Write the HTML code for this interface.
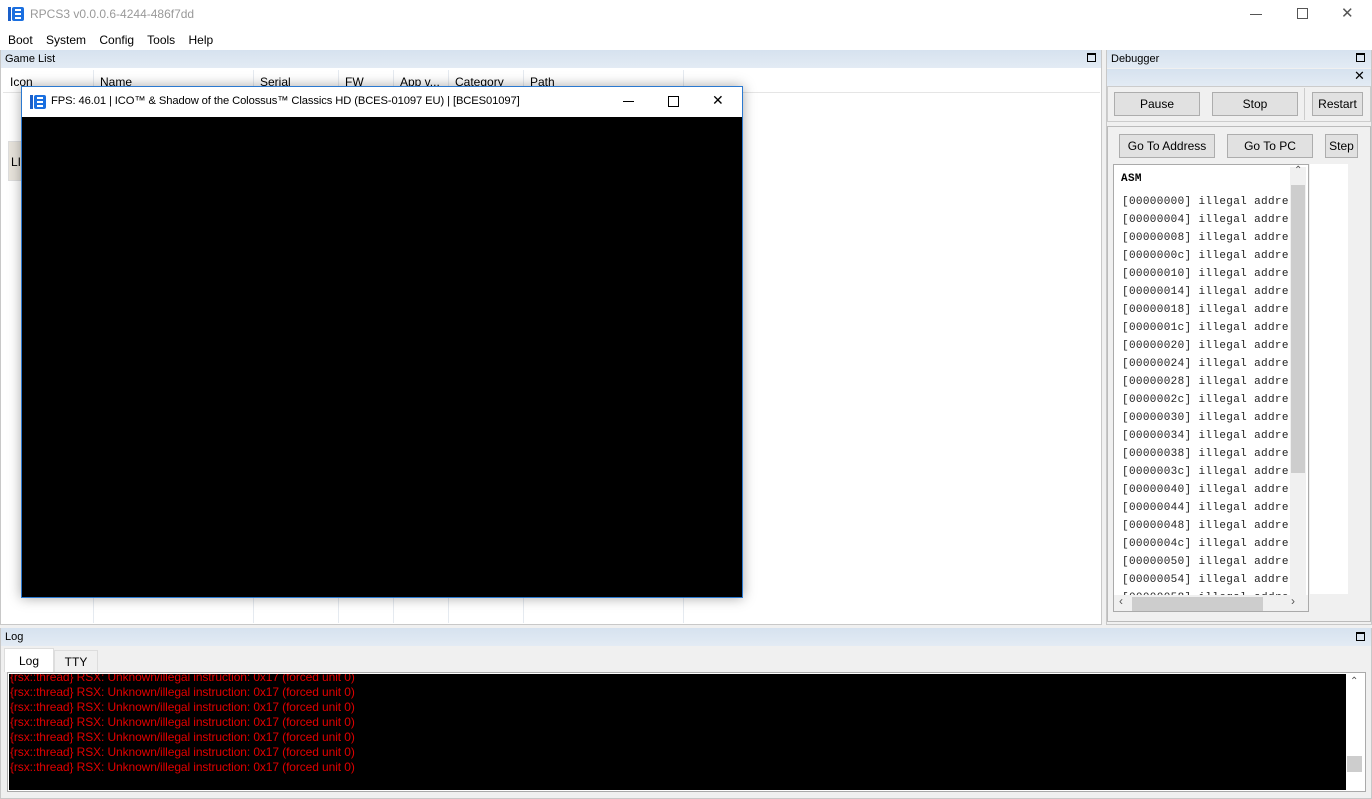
<!DOCTYPE html>
<html><head><style>
*{margin:0;padding:0;box-sizing:border-box}
body{width:1372px;height:799px;overflow:hidden;background:#f0f0f0;font-family:"Liberation Sans",sans-serif;font-size:12px;color:#000;position:relative}
.a{position:absolute}
.hdr{background:linear-gradient(#d6e2ef,#e3ebf4);height:18px;line-height:18px;padding-left:4px;font-size:11px}
.btn{position:absolute;background:#e1e1e1;border:1px solid #adadad;text-align:center;font-size:12px}
.mono{font-family:"Liberation Mono",monospace;font-size:11px;color:#000;letter-spacing:0.35px}
.log{color:#e00000;font-size:12px;letter-spacing:-0.1px;line-height:15px;position:absolute;left:10px;white-space:nowrap}
.col{position:absolute;top:70px;height:553px;border-left:1px solid #e5eaf0}
</style></head><body>
<div class="a" style="left:0;top:0;width:1372px;height:50px;background:#fff"></div>
<svg class="a" style="left:8px;top:7px" width="16" height="14"><rect x="0" y="0" width="3" height="14" fill="#1a5fc9"/><rect x="4" y="0" width="12" height="14" rx="2" fill="#1a6fe0"/><path d="M7 3h6M7 7h6M7 11h6" stroke="#fff" stroke-width="2"/></svg>
<div class="a" style="left:30px;top:7px;color:#999;font-size:12px">RPCS3 v0.0.0.6-4244-486f7dd</div>
<div class="a" style="left:1250px;top:14px;width:12px;height:1px;background:#555"></div>
<div class="a" style="left:1297px;top:8px;width:11px;height:11px;border:1px solid #555"></div>
<div class="a" style="left:1341px;top:4px;font-size:15px;color:#555">&#10005;</div>
<div class="a" style="left:8px;top:33px;font-size:12px;word-spacing:10px">Boot System Config Tools Help</div>

<div class="a" style="left:0;top:50px;width:1102px;height:575px;border:1px solid #c8c8c8;background:#fff"></div>
<div class="a hdr" style="left:1px;top:50px;width:1100px">Game List</div>
<div class="a" style="left:1087px;top:53px;width:9px;height:9px;border:1px solid #000;border-top-width:2px"></div>
<div class="a" style="left:3px;top:70px;width:1097px;height:23px;border-bottom:1px solid #e5e5e5"></div>
<div class="col" style="left:93px"></div><div class="col" style="left:253px"></div><div class="col" style="left:338px"></div><div class="col" style="left:393px"></div><div class="col" style="left:448px"></div><div class="col" style="left:523px"></div><div class="col" style="left:683px"></div>
<div class="a" style="top:75px;left:10px">Icon</div><div class="a" style="top:75px;left:100px">Name</div><div class="a" style="top:75px;left:260px">Serial</div><div class="a" style="top:75px;left:345px">FW</div><div class="a" style="top:75px;left:400px">App v...</div><div class="a" style="top:75px;left:455px">Category</div><div class="a" style="top:75px;left:530px">Path</div>
<div class="a" style="left:8px;top:141px;width:16px;height:40px;background:#e8e4dc;border:1px solid #ddd;padding:13px 0 0 2px;overflow:hidden">LIF</div>

<div class="a" style="left:21px;top:86px;width:722px;height:512px;border:1px solid #2b79d0;background:#000;box-shadow:0 0 12px rgba(0,0,0,.35)"></div>
<div class="a" style="left:22px;top:87px;width:720px;height:30px;background:#fff"></div>
<svg class="a" style="left:30px;top:95px" width="16" height="14"><rect x="0" y="0" width="3" height="14" fill="#1a5fc9"/><rect x="4" y="0" width="12" height="14" rx="2" fill="#1a6fe0"/><path d="M7 3h6M7 7h6M7 11h6" stroke="#fff" stroke-width="2"/></svg>
<div class="a" style="left:51px;top:95px;font-size:11.2px;letter-spacing:-0.1px">FPS: 46.01 | ICO™ &amp; Shadow of the Colossus™ Classics HD (BCES-01097 EU) | [BCES01097]</div>
<div class="a" style="left:623px;top:101px;width:11px;height:1px;background:#000"></div>
<div class="a" style="left:668px;top:96px;width:11px;height:11px;border:1px solid #000"></div>
<div class="a" style="left:712px;top:92px;font-size:14px">&#10005;</div>

<div class="a" style="left:1106px;top:50px;width:266px;height:575px;border:1px solid #c8c8c8;background:#f0f0f0"></div>
<div class="a hdr" style="left:1107px;top:50px;width:264px">Debugger</div>
<div class="a" style="left:1356px;top:53px;width:9px;height:9px;border:1px solid #000;border-top-width:2px"></div>
<div class="a" style="left:1107px;top:69px;width:264px;height:17px;background:linear-gradient(#d6e2ef,#e3ebf4)"></div>
<div class="a" style="left:1354px;top:68px;font-size:13px">&#10005;</div>
<div class="a" style="left:1107px;top:86px;width:264px;height:36px;border:1px solid #ccc"></div>
<div class="a" style="left:1304px;top:88px;width:1px;height:32px;background:#ccc"></div>
<div class="btn" style="left:1114px;top:92px;width:86px;height:24px;line-height:22px">Pause</div>
<div class="btn" style="left:1212px;top:92px;width:86px;height:24px;line-height:22px">Stop</div>
<div class="btn" style="left:1312px;top:92px;width:51px;height:24px;line-height:22px">Restart</div>
<div class="a" style="left:1107px;top:126px;width:264px;height:496px;border:1px solid #bbb"></div>
<div class="btn" style="left:1119px;top:134px;width:96px;height:24px;line-height:22px">Go To Address</div>
<div class="btn" style="left:1227px;top:134px;width:86px;height:24px;line-height:22px">Go To PC</div>
<div class="btn" style="left:1325px;top:134px;width:33px;height:24px;line-height:22px">Step</div>
<div class="a" style="left:1113px;top:164px;width:196px;height:448px;border:1px solid #aaa;background:#fff;overflow:hidden">
<div class="mono a" style="left:7px;top:8px;font-weight:bold">ASM</div>
<div class="mono a" style="left:8px;top:28px;line-height:18px;white-space:pre;color:#222">[00000000] illegal addre
[00000004] illegal addre
[00000008] illegal addre
[0000000c] illegal addre
[00000010] illegal addre
[00000014] illegal addre
[00000018] illegal addre
[0000001c] illegal addre
[00000020] illegal addre
[00000024] illegal addre
[00000028] illegal addre
[0000002c] illegal addre
[00000030] illegal addre
[00000034] illegal addre
[00000038] illegal addre
[0000003c] illegal addre
[00000040] illegal addre
[00000044] illegal addre
[00000048] illegal addre
[0000004c] illegal addre
[00000050] illegal addre
[00000054] illegal addre
[00000058] illegal addre</div>
<div class="a" style="left:176px;top:2px;width:16px;height:430px;background:#f0f0f0"></div>
<div class="a" style="left:177px;top:20px;width:14px;height:288px;background:#cdcdcd"></div>
<div class="a" style="left:180px;top:0px;font-size:10px;color:#555">&#8963;</div>
<div class="a" style="left:0;top:430px;width:194px;height:16px;background:#f0f0f0"></div>
<div class="a" style="left:18px;top:432px;width:131px;height:14px;background:#cdcdcd"></div>
<div class="a" style="left:5px;top:429px;font-size:12px;color:#555">&lsaquo;</div>
<div class="a" style="left:177px;top:429px;font-size:12px;color:#555">&rsaquo;</div>
</div>
<div class="a" style="left:1310px;top:164px;width:38px;height:430px;background:#fff"></div>

<div class="a" style="left:0;top:628px;width:1372px;height:171px;border:1px solid #c8c8c8;background:#f0f0f0"></div>
<div class="a hdr" style="left:1px;top:628px;width:1370px">Log</div>
<div class="a" style="left:1356px;top:632px;width:9px;height:9px;border:1px solid #000;border-top-width:2px"></div>
<div class="a" style="left:4px;top:648px;width:50px;height:24px;background:#fff;border:1px solid #ddd;border-bottom:none;text-align:center;line-height:24px">Log</div>
<div class="a" style="left:54px;top:650px;width:44px;height:22px;border:1px solid #ddd;border-bottom:none;text-align:center;line-height:22px">TTY</div>
<div class="a" style="left:7px;top:672px;width:1359px;height:120px;border:1px solid #aaa;background:#fff"></div>
<div class="a" style="left:9px;top:674px;width:1337px;height:116px;background:#000;overflow:hidden">
<div class="log" style="top:-4px;left:1px">{rsx::thread} RSX: Unknown/illegal instruction: 0x17 (forced unit 0)<br>{rsx::thread} RSX: Unknown/illegal instruction: 0x17 (forced unit 0)<br>{rsx::thread} RSX: Unknown/illegal instruction: 0x17 (forced unit 0)<br>{rsx::thread} RSX: Unknown/illegal instruction: 0x17 (forced unit 0)<br>{rsx::thread} RSX: Unknown/illegal instruction: 0x17 (forced unit 0)<br>{rsx::thread} RSX: Unknown/illegal instruction: 0x17 (forced unit 0)<br>{rsx::thread} RSX: Unknown/illegal instruction: 0x17 (forced unit 0)</div>
</div>
<div class="a" style="left:1350px;top:676px;font-size:10px;color:#555">&#8963;</div>
<div class="a" style="left:1347px;top:756px;width:15px;height:16px;background:#cdcdcd"></div>
</body></html>
